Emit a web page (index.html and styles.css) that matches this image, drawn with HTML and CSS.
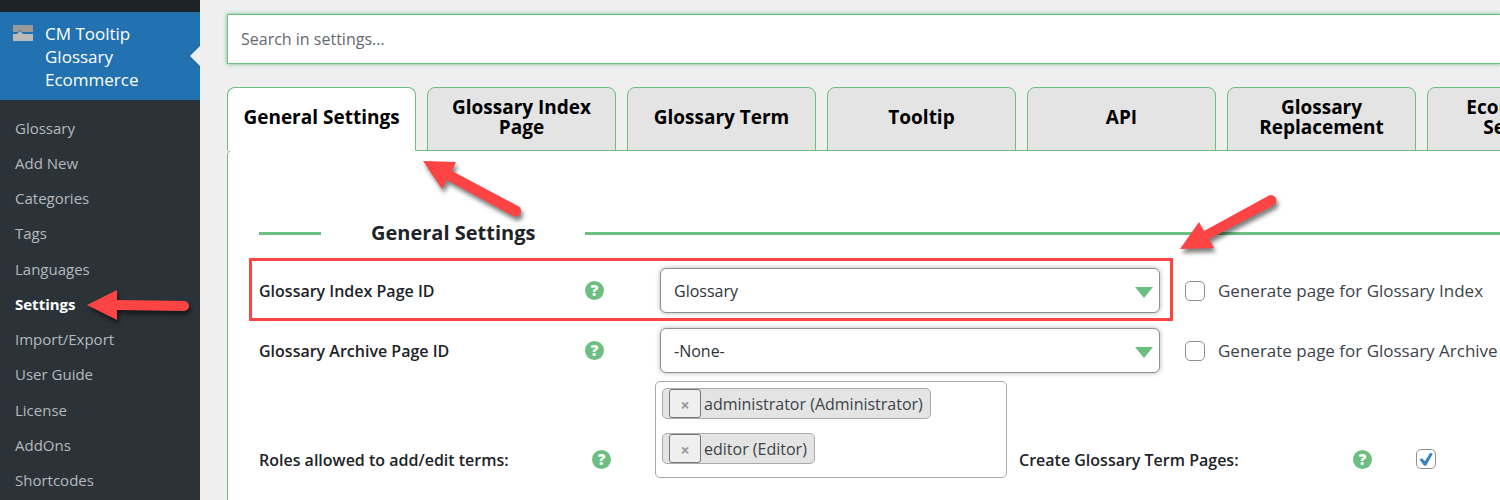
FILE: index.html
```html
<!DOCTYPE html>
<html lang="en">
<head>
<meta charset="utf-8">
<title>CM Tooltip Glossary Ecommerce – Settings</title>
<link rel="stylesheet" href="styles.css">
</head>
<body>
<div class="admin">
  <nav class="sidebar" aria-label="Admin menu">
    <a class="plugin" href="#plugin">
      <svg class="plugin-icon" width="20" height="16" viewBox="0 0 20 16" aria-hidden="true">
        <path fill="#999" d="M0 0h20v7H9L7 5 5 7H0z"/>
        <path fill="#bbb" d="M0 9h4l3-3 3 3h10v7H0z"/>
      </svg>
      <span>CM Tooltip Glossary Ecommerce</span>
    </a>
    <ul class="submenu">
      <li><a href="#glossary">Glossary</a></li>
      <li><a href="#add">Add New</a></li>
      <li><a href="#categories">Categories</a></li>
      <li><a href="#tags">Tags</a></li>
      <li><a href="#languages">Languages</a></li>
      <li><a class="current" href="#settings">Settings</a></li>
      <li><a href="#import">Import/Export</a></li>
      <li><a href="#guide">User Guide</a></li>
      <li><a href="#license">License</a></li>
      <li><a href="#addons">AddOns</a></li>
      <li><a href="#shortcodes">Shortcodes</a></li>
    </ul>
  </nav>

  <main class="content">
    <input class="search" type="text" placeholder="Search in settings..." aria-label="Search in settings">

    <div class="tabs" role="tablist">
      <button class="tab active" role="tab" aria-selected="true">General Settings</button>
      <button class="tab" role="tab">Glossary Index Page</button>
      <button class="tab" role="tab">Glossary Term</button>
      <button class="tab" role="tab">Tooltip</button>
      <button class="tab" role="tab">API</button>
      <button class="tab" role="tab">Glossary Replacement</button>
      <button class="tab" role="tab">Ecommerce Settings</button>
    </div>

    <section class="panel">
      <h2 class="section-title">General Settings</h2>

      <div class="row">
        <label class="name" for="index-page">Glossary Index Page ID</label>
        <button class="help" aria-label="Help: index page">?</button>
        <span class="select-wrap">
          <select id="index-page"><option>Glossary</option></select>
        </span>
        <label class="check"><input type="checkbox"> Generate page for Glossary Index</label>
      </div>

      <div class="row">
        <label class="name" for="archive-page">Glossary Archive Page ID</label>
        <button class="help" aria-label="Help: archive page">?</button>
        <span class="select-wrap">
          <select id="archive-page"><option>-None-</option></select>
        </span>
        <label class="check"><input type="checkbox"> Generate page for Glossary Archive</label>
      </div>

      <div class="roles-row">
        <span class="name">Roles allowed to add/edit terms:</span>
        <button class="help" aria-label="Help: roles">?</button>
        <ul class="roles">
          <li class="role"><button class="remove" aria-label="Remove administrator">×</button>administrator (Administrator)</li>
          <li class="role"><button class="remove" aria-label="Remove editor">×</button>editor (Editor)</li>
        </ul>
        <label class="name" for="term-pages">Create Glossary Term Pages:</label>
        <button class="help" aria-label="Help: term pages">?</button>
        <input id="term-pages" type="checkbox" checked>
      </div>
    </section>
  </main>

  <div class="highlight"></div>
  <svg class="arrow arrow-menu" width="116" height="50" viewBox="80 280 116 50" aria-hidden="true">
    <path d="M87 305 117 290v10L184 301a5 5 0 0 1 0 10L117 310v10z"/>
  </svg>
  <svg class="arrow arrow-tab" width="120" height="76" viewBox="414 150 120 76" aria-hidden="true">
    <path d="M423 161 456 162 452 171 518 206a5 5 0 0 1-5 10L447 180 442 189z"/>
  </svg>
  <svg class="arrow arrow-field" width="120" height="76" viewBox="1170 188 120 76" aria-hidden="true">
    <path d="M1180 249 1199 222 1204 231 1268 196a5 5 0 0 1 6 9L1209 239 1214 248z"/>
  </svg>
</div>
</body>
</html>
```
FILE: styles.css
```css
* {
  box-sizing: border-box;
}

body {
  margin: 0;
  background: #efefef;
  color: #3c434a;
  font: 16px/24px "Open Sans", "Noto Sans", sans-serif;
}

button,
input,
select {
  margin: 0;
  font: inherit;
}

ul {
  margin: 0;
  padding: 0;
  list-style: none;
}

.admin {
  position: relative;
  display: flex;
  min-height: 100vh;
  overflow: hidden;
}

/* Sidebar */
.sidebar {
  display: flex;
  flex: 0 0 200px;
  flex-direction: column;
  border-top: 12px solid #1d2327;
  padding-bottom: 2px;
  background: #2c3338;
}

.plugin {
  position: relative;
  display: flex;
  gap: 12px;
  padding: 10px 40px 9px 13px;
  background: #2271b1;
  color: #fff;
  font-size: 17px;
  line-height: 23px;
  text-decoration: none;
}

.plugin::after {
  position: absolute;
  top: 34px;
  right: 0;
  border: 10px solid transparent;
  border-left: 0;
  border-right-color: #efefef;
  content: "";
}

.plugin-icon {
  flex: none;
  margin-top: 3px;
}

.submenu {
  display: flex;
  flex: 1;
  flex-direction: column;
  padding-top: 10px;
  font-size: 15px;
}

.submenu li {
  display: flex;
  flex: 1;
  align-items: center;
  padding-left: 15px;
}

.submenu a {
  color: #b4b9be;
  text-decoration: none;
}

.submenu .current {
  color: #fff;
  font-weight: 700;
}

/* Content */
.content {
  display: flex;
  flex: 1;
  flex-direction: column;
  min-width: 0;
  padding: 14px 0 0 27px;
}

.search {
  width: 100%;
  height: 50px;
  border: 1px solid #6cbf80;
  border-right: 0;
  padding: 0 13px;
  background: #fff;
  box-shadow: 0 0 4px #6cbf80;
  outline: none;
}

.search::placeholder {
  color: #646970;
}

.tabs {
  z-index: 1;
  display: flex;
  gap: 11px;
  margin: 23px 0 -1px;
  overflow: hidden;
}

.tab {
  flex: 0 0 189px;
  height: 64px;
  border: 1px solid #6cbf80;
  border-radius: 8px 8px 0 0;
  padding: 0 10px 4px;
  background: #e4e4e4;
  color: #000;
  font-size: 19px;
  font-weight: 700;
  line-height: 20px;
}

.tab.active {
  border-bottom-color: #fff;
  background: #fff;
}

.panel {
  flex: 1;
  border-top: 1px solid #6cbf80;
  border-left: 1px solid #6cbf80;
  border-top-left-radius: 5px;
  padding: 66px 0 0 31px;
  background: #fff;
}

.section-title {
  display: flex;
  align-items: center;
  gap: 50px;
  margin: 0 0 19px;
  color: #1d2327;
  font-size: 20px;
  font-weight: 700;
  line-height: 32px;
}

.section-title::before,
.section-title::after {
  width: 62px;
  height: 3px;
  background: #6cbf80;
  content: "";
}

.section-title::after {
  flex: 1;
}

.row {
  display: grid;
  grid-template-columns: 326px 75px 500px auto;
  align-items: center;
  height: 45px;
  margin-bottom: 15px;
  white-space: nowrap;
}

.name {
  color: #1d2327;
  font-weight: 600;
}

.help {
  width: 19px;
  height: 19px;
  border: 0;
  border-radius: 50%;
  padding: 0;
  background: #6cbf80;
  color: #fff;
  font-size: 15px;
  font-weight: 800;
  line-height: 19px;
}

.select-wrap {
  position: relative;
  display: block;
}

.select-wrap::after {
  position: absolute;
  top: 19px;
  right: 7px;
  border: 9px solid transparent;
  border-top: 11px solid #6cbf80;
  border-bottom: 0;
  content: "";
  pointer-events: none;
}

select {
  width: 100%;
  height: 45px;
  border: 1px solid #8c8f94;
  border-radius: 6px;
  padding: 0 13px;
  appearance: none;
  background: #fff;
  box-shadow: 0 0 5px rgba(0, 0, 0, 0.3);
  color: #2c3338;
}

.check {
  display: flex;
  align-items: center;
  gap: 13px;
  padding-left: 25px;
  font-size: 17px;
}

input[type="checkbox"] {
  flex: none;
  width: 20px;
  height: 20px;
  border: 1px solid #8c8f94;
  border-radius: 5px;
  appearance: none;
  background: #fff;
}

input[type="checkbox"]:checked::before {
  display: block;
  width: 14px;
  height: 14px;
  margin: 2px;
  background: #3582c4;
  clip-path: polygon(4% 54%, 22% 44%, 42% 66%, 80% 6%, 98% 12%, 52% 96%, 36% 98%);
  content: "";
}

.roles-row {
  display: grid;
  grid-template-columns: 333px 63px 352px 346px 63px auto;
  align-items: end;
  margin-top: -7px;
  white-space: nowrap;
}

.roles-row > .name {
  padding-bottom: 6px;
}

.roles-row > .help,
.roles-row > input {
  margin-bottom: 9px;
}

.roles + .name {
  padding-left: 12px;
}

.roles {
  display: flex;
  flex-direction: column;
  align-items: flex-start;
  gap: 14px;
  height: 97px;
  border: 1px solid #aaa;
  border-radius: 5px;
  padding: 6px;
}

.role {
  display: flex;
  align-items: center;
  height: 31px;
  border: 1px solid #aaa;
  border-radius: 5px;
  padding: 0 7px 0 6px;
  background: #e4e4e4;
}

.remove {
  width: 32px;
  height: 29px;
  margin-right: 3px;
  border: 1px solid #777;
  border-radius: 3px;
  padding: 3px 0 0;
  background: #efefef;
  color: #999;
  font-weight: 700;
  line-height: 24px;
}

/* Annotations drawn over the page */
.highlight {
  position: absolute;
  z-index: 2;
  top: 258px;
  left: 249px;
  width: 924px;
  height: 63px;
  border: 3px solid #fc4445;
  pointer-events: none;
}

.arrow {
  position: absolute;
  z-index: 2;
  fill: #fc4445;
  filter: drop-shadow(2px 4px 2px rgba(0, 0, 0, 0.5));
  pointer-events: none;
}

.arrow-menu {
  top: 280px;
  left: 80px;
}

.arrow-tab {
  top: 150px;
  left: 414px;
}

.arrow-field {
  top: 188px;
  left: 1170px;
}
```
